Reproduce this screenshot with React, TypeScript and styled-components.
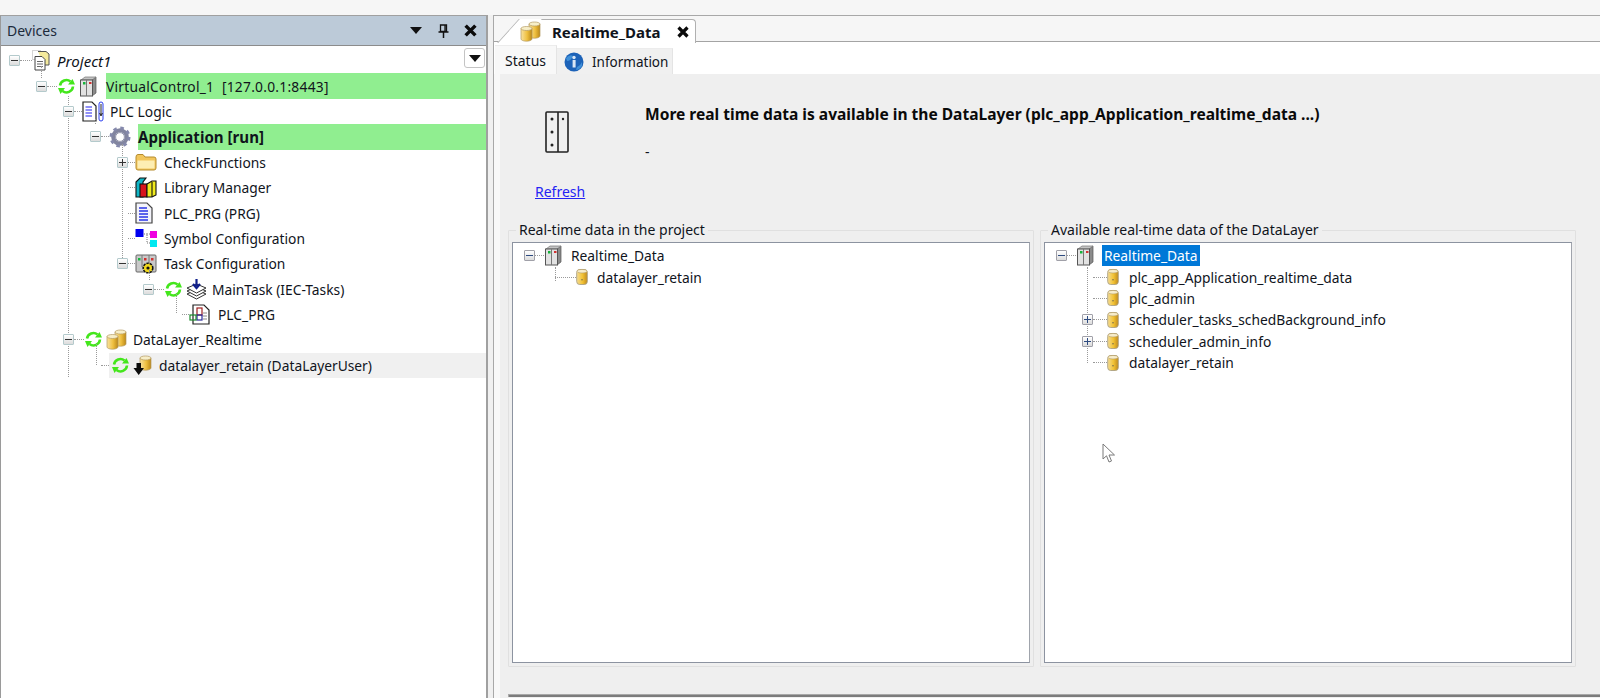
import React from 'react';
import styled, { createGlobalStyle } from 'styled-components';

const GlobalStyle = createGlobalStyle`
  html, body {
    margin: 0;
    padding: 0;
    background: #f5f5f5;
  }
  body {
    font-family: 'Noto Sans', 'Liberation Sans', sans-serif;
    font-size: 13.8px;
    color: #10141c;
  }
`;

/* ---------- icons ---------- */

const Sync = () => (
  <svg width="19" height="19" viewBox="0 0 19 19" fill="none">
    <path d="M3 8.5 A6.5 6.5 0 0 1 13.5 4.5" stroke="#44e61c" strokeWidth="2.6" />
    <path d="M16 9.5 A6.5 6.5 0 0 1 5.5 14" stroke="#44e61c" strokeWidth="2.6" />
    <polygon points="11,7.5 18,7.5 15.5,2" fill="#44e61c" />
    <polygon points="1,11 8,11 3.5,17" fill="#44e61c" />
  </svg>
);

const Server = () => (
  <svg width="19" height="21" viewBox="0 0 19 21">
    <polygon points="13,4 17,1 17,17 13,20" fill="#8b8b8b" stroke="#555" strokeWidth="0.7" />
    <polygon points="2,4 6,1 17,1 13,4" fill="#c4c4c4" stroke="#777" strokeWidth="0.7" />
    <rect x="1.5" y="4" width="12" height="16" fill="#e2e2e2" stroke="#555" strokeWidth="1" />
    <line x1="7.5" y1="4" x2="7.5" y2="20" stroke="#777" strokeWidth="1" />
    <rect x="4" y="6" width="2.5" height="2.5" fill="#16b33a" />
    <rect x="10" y="6" width="2.5" height="2" fill="#d23030" />
  </svg>
);

const ProjectDoc = () => (
  <svg width="18" height="21" viewBox="0 0 18 21" fill="none">
    <rect x="0.5" y="0.5" width="8" height="9" stroke="#aaa" strokeDasharray="1 1" />
    <path d="M6 1.5 H14 L17 4 V15 H12" fill="#f4ea9c" stroke="#555" />
    <path d="M3 6.5 H10 L13 9.5 V20 H3 Z" fill="#fff" stroke="#444" />
    <path d="M5 11.5 H11 M5 14 H11 M5 16.5 H11" stroke="#666" />
  </svg>
);

const PlcDoc = () => (
  <svg width="22" height="21" viewBox="0 0 22 21" fill="none">
    <path d="M1 1 H10 L14 5 V20 H1 Z" fill="#fff" stroke="#222" strokeWidth="1.2" />
    <path d="M3.5 6 H10 M3.5 9 H10 M3.5 12 H10 M3.5 15 H10" stroke="#2323f0" strokeWidth="1.2" />
    <rect x="17" y="1" width="4" height="19" rx="2" stroke="#2b3ff0" strokeWidth="1" />
    <path d="M19 3 V14 M17.6 12 L19 15 L20.4 12" stroke="#111" strokeWidth="0.9" />
  </svg>
);

const Gear = () => (
  <svg width="22" height="22" viewBox="0 0 22 22" fill="none">
    <circle cx="11" cy="11" r="6.8" stroke="#82859f" strokeWidth="4" />
    <circle cx="11" cy="11" r="9" stroke="#8589ac" strokeWidth="3" strokeDasharray="3.5 3.57" />
    <circle cx="11" cy="11" r="4.4" fill="#fff" stroke="#6a6d8c" strokeWidth="0.7" />
  </svg>
);

const Folder = () => (
  <svg width="22" height="18" viewBox="0 0 22 18">
    <path d="M1 4 Q1 1.5 3 1.5 H8 L10 4 H19 Q21 4 21 6 V15 Q21 17 19 17 H3 Q1 17 1 15 Z" fill="#f2c65c" stroke="#b58c2e" />
    <path d="M2.5 7.5 H19.5 V15 Q19.5 15.5 19 15.5 H3 Q2.5 15.5 2.5 15 Z" fill="#fdeeb3" />
  </svg>
);

const Books = () => (
  <svg width="22" height="21" viewBox="0 0 22 21" stroke="#111" strokeWidth="1.1">
    <polygon points="1,5 5,1 11,1 8,5 8,20 1,20" fill="#0fb6c6" />
    <rect x="5" y="7" width="7" height="13" fill="#d9141c" />
    <polygon points="12,7 17,4 21,4 21,18 17,20 12,20" fill="#f0ea1e" />
    <line x1="17" y1="5" x2="17" y2="20" />
  </svg>
);

const PrgDoc = () => (
  <svg width="18" height="22" viewBox="0 0 18 22" fill="none">
    <path d="M1 1 H12 L17 6 V21 H1 Z" fill="#f4f4fb" stroke="#444" strokeWidth="1.2" />
    <path d="M4 6 H12 M4 9 H13 M4 12 H13 M4 15 H13 M4 18 H13" stroke="#2a35e8" strokeWidth="1.3" />
  </svg>
);

const Symbols = () => (
  <svg width="22" height="18" viewBox="0 0 22 18" fill="none">
    <path d="M7 5 H12 V14 H15 M12 5 H15" stroke="#777" strokeDasharray="1 1" />
    <rect x="0.5" y="0" width="8" height="8" fill="#0000f0" />
    <rect x="15" y="2" width="7" height="7" fill="#f000e0" />
    <rect x="15" y="11" width="7" height="7" fill="#00e8f0" />
  </svg>
);

const TaskConfig = () => (
  <svg width="22" height="21" viewBox="0 0 22 21">
    <rect x="1" y="2" width="20" height="17" rx="1" fill="#c9c9c9" stroke="#666" />
    <path d="M7 2 V14 M14 2 V14" stroke="#777" />
    <rect x="3" y="5" width="2.5" height="2.5" fill="#18b840" />
    <rect x="9" y="5" width="2.5" height="2.5" fill="#d23030" />
    <rect x="16" y="5" width="2.5" height="2.5" fill="#d23030" />
    <circle cx="13" cy="15" r="4.8" fill="#f0d81c" stroke="#111" strokeWidth="1.6" strokeDasharray="2.4 1" />
    <circle cx="13" cy="15" r="1.6" fill="#111" />
  </svg>
);

const TaskStack = () => (
  <svg width="21" height="21" viewBox="0 0 21 21" fill="#fff" stroke="#333" strokeWidth="1">
    <polygon points="1,15 10.5,11 20,15 10.5,20" />
    <polygon points="1,12 10.5,8 20,12 10.5,17" />
    <polygon points="1,9 10.5,5 20,9 10.5,14" />
    <path d="M10.5 0 V7 M7 5 L10.5 9 L14 5" fill="none" stroke="#10208c" strokeWidth="2.2" />
  </svg>
);

const PouDoc = () => (
  <svg width="21" height="21" viewBox="0 0 21 21" fill="none">
    <path d="M4 1 H15 L20 6 V20 H4 Z" fill="#fff" stroke="#222" strokeWidth="1.2" />
    <path d="M14 9 H18 M14 12 H18 M14 15 H18" stroke="#888" />
    <rect x="8" y="4" width="5" height="7" stroke="#a02020" strokeWidth="1.2" />
    <rect x="8" y="11" width="5" height="5" stroke="#2a2a9c" strokeWidth="1.2" />
    <rect x="1" y="11" width="6" height="5" stroke="#1c8a2c" strokeWidth="1.2" />
  </svg>
);

const Cylinder = () => (
  <svg width="12" height="18" viewBox="0 0 12 18">
    <defs>
      <linearGradient id="goldSingle" x1="0" x2="1" y1="0" y2="0">
        <stop offset="0" stopColor="#f4dc94" />
        <stop offset="0.55" stopColor="#f2c234" />
        <stop offset="1" stopColor="#c08a1a" />
      </linearGradient>
    </defs>
    <rect x="0.7" y="1.5" width="10.6" height="15" rx="3" fill="url(#goldSingle)" stroke="#aaa084" strokeWidth="0.9" />
    <ellipse cx="6" cy="3.2" rx="5" ry="1.8" fill="#f6eccb" stroke="#b39a60" strokeWidth="0.6" />
    <rect x="5.5" y="11" width="1" height="1.4" fill="#555" />
  </svg>
);

const CylinderPair = () => (
  <svg width="21" height="21" viewBox="0 0 21 21">
    <path d="M9 3 V15 A5.5 2.2 0 0 0 20 15 V3 Z" fill="url(#goldPair)" stroke="#b39a60" strokeWidth="0.7" />
    <ellipse cx="14.5" cy="3" rx="5.5" ry="2" fill="#f7eec8" stroke="#b39a60" strokeWidth="0.7" />
    <path d="M1 7.5 V18 A5.5 2.2 0 0 0 12 18 V7.5 Z" fill="url(#goldPair)" stroke="#b39a60" strokeWidth="0.7" />
    <ellipse cx="6.5" cy="7.5" rx="5.5" ry="2" fill="#f7eec8" stroke="#b39a60" strokeWidth="0.7" />
    <defs>
      <linearGradient id="goldPair" x1="0" x2="1" y1="0" y2="0">
        <stop offset="0" stopColor="#f8e2a0" />
        <stop offset="0.55" stopColor="#efc040" />
        <stop offset="1" stopColor="#bb8818" />
      </linearGradient>
    </defs>
  </svg>
);

const CylinderDown = () => (
  <svg width="19" height="20" viewBox="0 0 19 20">
    <path d="M7 3 V13 A5.5 2.2 0 0 0 18 13 V3 Z" fill="url(#goldPair)" stroke="#b39a60" strokeWidth="0.7" />
    <ellipse cx="12.5" cy="3" rx="5.5" ry="2" fill="#f7eec8" stroke="#b39a60" strokeWidth="0.7" />
    <polygon points="3.5,8 8,8 8,13 11,13 5.7,20 0.5,13 3.5,13" fill="#0c0c0c" />
  </svg>
);

const InfoGlobe = () => (
  <svg width="20" height="20" viewBox="0 0 20 20">
    <circle cx="10" cy="10" r="9.5" fill="#1c62b8" />
    <path d="M2 6 Q6 2 9 4 Q7 9 3 9 Z M13 15 Q17 13 18 10 L18 14 Q15 18 12 18 Z" fill="#3f8fd8" />
    <rect x="8.6" y="8" width="3" height="7.5" fill="#d9e6f5" />
    <circle cx="10" cy="5.5" r="1.7" fill="#d9e6f5" />
  </svg>
);

const Rack = () => (
  <svg width="24" height="42" viewBox="0 0 24 42" fill="none">
    <rect x="1" y="1" width="22" height="40" rx="1" stroke="#222" strokeWidth="1.6" />
    <line x1="13" y1="1" x2="13" y2="41" stroke="#222" strokeWidth="1.6" />
    <circle cx="7" cy="8" r="1.5" fill="#222" />
    <circle cx="7" cy="21" r="1.5" fill="#222" />
    <circle cx="7" cy="34" r="1.5" fill="#222" />
    <circle cx="18" cy="8" r="1.2" fill="#222" />
  </svg>
);

const Triangle = () => (
  <svg width="12" height="7" viewBox="0 0 12 7">
    <polygon points="0,0 12,0 6,7" fill="#111" />
  </svg>
);

const Pin = () => (
  <svg width="11" height="14" viewBox="0 0 11 14" fill="none" stroke="#111">
    <path d="M2.5 1 H8.5 V7.5 H2.5 Z M7 1 V7.5 M0.5 8 H10.5" strokeWidth="1.3" />
    <path d="M5.5 8 V14" strokeWidth="1.5" />
  </svg>
);

const Cross = ({ size = 13 }: { size?: number }) => (
  <svg width={size} height={size} viewBox="0 0 12 12">
    <path d="M1.5 1.5 L10.5 10.5 M10.5 1.5 L1.5 10.5" stroke="#0a0a0a" strokeWidth="3.2" />
  </svg>
);

const Cursor = () => (
  <svg width="14" height="21" viewBox="0 0 14 21">
    <path d="M1 1 V16 L4.5 12.8 L7 19 L9.5 18 L7 12 L12.5 12 Z" fill="#fff" stroke="#7a7a7a" strokeWidth="1" />
  </svg>
);

/* ---------- page ---------- */

const Page = styled.div`
  width: 1600px;
  height: 698px;
  overflow: hidden;
  position: relative;
  display: flex;
  flex-direction: column;
  background: #f5f5f5;
`;

const TopStrip = styled.div`
  height: 15px;
  flex: none;
  background: #f6f6f6;
`;

const Main = styled.div`
  flex: 1;
  display: flex;
  min-height: 0;
`;

const DevicesPanel = styled.section`
  width: 488px;
  flex: none;
  box-sizing: border-box;
  display: flex;
  flex-direction: column;
  border-left: 1px solid #9a9a9a;
  border-right: 2px solid #a0a0a0;
  border-top: 1px solid #a0a0a0;
  background: #fff;
`;

const PanelHeader = styled.header`
  height: 29px;
  flex: none;
  display: flex;
  align-items: center;
  padding-left: 6px;
  background: #bccad8;
  border-bottom: 1px solid #8c8c8c;
  font-size: 14px;
  color: #1c2a3c;
`;

const PanelTitle = styled.span`
  flex: 1;
`;

const HeaderButton = styled.span<{ $width: number }>`
  width: ${p => p.$width}px;
  display: flex;
  justify-content: center;
`;

const Splitter = styled.div`
  width: 5px;
  flex: none;
  background: #f0f0f0;
`;

const TreeArea = styled.div`
  position: relative;
  flex: 1;
  padding-top: 2px;
`;

const Row = styled.div<{ $left: number; $height?: number }>`
  height: ${p => p.$height ?? 25.4}px;
  display: flex;
  align-items: center;
  padding-left: ${p => p.$left}px;
  white-space: pre;
`;

const Toggle = styled.span<{ $kind?: string; $tone?: string }>`
  width: 11px;
  height: 11px;
  flex: none;
  box-sizing: border-box;
  position: relative;
  visibility: ${p => (p.$kind ? 'visible' : 'hidden')};
  border: 1px solid ${p => (p.$tone === 'soft' ? '#b4cacc' : '#a0a0a8')};
  background: linear-gradient(#fff, #dcdcdc);
  border-radius: 1px;

  &::before {
    content: '';
    position: absolute;
    left: 1px;
    right: 1px;
    top: 4px;
    height: 1px;
    background: ${p => (p.$tone === 'soft' ? '#333' : '#2d4a80')};
  }

  &::after {
    content: '';
    display: ${p => (p.$kind === 'plus' ? 'block' : 'none')};
    position: absolute;
    top: 1px;
    bottom: 1px;
    left: 4px;
    width: 1px;
    background: ${p => (p.$tone === 'soft' ? '#333' : '#2d4a80')};
  }
`;

const Stub = styled.span<{ $width: number }>`
  width: ${p => p.$width}px;
  flex: none;
  border-top: 1px dotted #9a9a9a;
`;

const Body = styled.span<{ $shade?: boolean }>`
  flex: 1;
  align-self: stretch;
  display: flex;
  align-items: center;
  background: ${p => (p.$shade ? '#f0f0f0' : 'transparent')};
  padding-left: ${p => (p.$shade ? 2 : 0)}px;
`;

const IconSlot = styled.span<{ $width: number }>`
  width: ${p => p.$width}px;
  flex: none;
  display: flex;
  align-items: center;
  gap: 3px;
`;

const Label = styled.span<{ $fill?: string; $bold?: boolean; $italic?: boolean; $spread?: boolean }>`
  flex: 1;
  align-self: stretch;
  display: flex;
  align-items: center;
  background: ${p => p.$fill ?? 'transparent'};
  font-weight: ${p => (p.$bold ? 700 : 400)};
  font-style: ${p => (p.$italic ? 'italic' : 'normal')};
  font-size: ${p => (p.$bold || p.$italic ? 15.1 : 13.8)}px;
  letter-spacing: ${p => (p.$spread ? 0.25 : 0)}px;
`;

const Guide = styled.span<{ $x: number; $top: number; $height: number }>`
  position: absolute;
  left: ${p => p.$x}px;
  top: ${p => p.$top}px;
  height: ${p => p.$height}px;
  border-left: 1px dotted #9a9a9a;
`;

const ComboButton = styled.span`
  position: absolute;
  top: 2px;
  right: 1px;
  width: 21px;
  height: 20px;
  box-sizing: border-box;
  display: flex;
  align-items: center;
  justify-content: center;
  background: #fff;
  border: 1px solid #c4c4c4;
  border-radius: 3px;
`;

/* editor side */

const EditorPanel = styled.section`
  flex: 1;
  min-width: 0;
  display: flex;
  flex-direction: column;
  border-left: 1px solid #a8a8a8;
  border-top: 1px solid #a8a8a8;
  background: #f8f8f8;
`;

const DocTabStrip = styled.div`
  height: 26px;
  flex: none;
  box-sizing: border-box;
  padding: 3px 0 0 25px;
  display: flex;
  border-bottom: 1px solid #a4a4a4;
  background: #f6f6f6;
`;

const DocTab = styled.div`
  position: relative;
  width: 177px;
  height: 24px;
  box-sizing: border-box;
  display: flex;
  align-items: center;
  padding-left: 1px;
  gap: 11px;
  background: #fff;
  border-top: 1px solid #b0b0b0;
  border-right: 1px solid #b0b0b0;
  border-radius: 0 4px 0 0;
  font-weight: 700;
  font-size: 15px;

  &::before {
    content: '';
    position: absolute;
    left: -11px;
    top: -1px;
    bottom: 0;
    width: 22px;
    background: #fff;
    border-left: 1px solid #b0b0b0;
    transform: skewX(-42deg);
    z-index: 0;
  }

  & > * {
    position: relative;
    z-index: 1;
  }
`;

const DocTabClose = styled.span`
  margin-left: auto;
  margin-right: 6px;
  display: flex;
`;

const SubTabBar = styled.div`
  height: 32px;
  flex: none;
  box-sizing: border-box;
  display: flex;
  align-items: flex-end;
  padding-left: 1px;
  background: #fff;
`;

const SubTab = styled.div<{ $active?: boolean }>`
  box-sizing: border-box;
  display: flex;
  align-items: center;
  gap: 8px;
  height: ${p => (p.$active ? 29 : 26)}px;
  width: ${p => (p.$active ? 62 : 116)}px;
  padding-left: ${p => (p.$active ? 10 : 7)}px;
  padding-top: ${p => (p.$active ? 0 : 1)}px;
  background: ${p => (p.$active ? '#f8f8f8' : '#f0f0f0')};
  border-top: 1px solid #ececec;
  border-right: 1px solid #e4e4e4;
  font-size: ${p => (p.$active ? 14 : 13.5)}px;
`;

const StatusPane = styled.div`
  flex: 1;
  min-height: 0;
  margin-left: 6px;
  background: #efefef;
  display: flex;
  flex-direction: column;
`;

const InfoRow = styled.div`
  height: 148px;
  flex: none;
  display: grid;
  grid-template-columns: 145px 1fr;
`;

const RefreshColumn = styled.div`
  display: flex;
  flex-direction: column;
  padding: 37px 0 0 35px;
`;

const RackHolder = styled.div`
  padding-left: 10px;
`;

const RefreshLink = styled.a`
  margin-top: 25px;
  color: #2424f4;
  text-decoration: underline;
  font-size: 14px;
`;

const Message = styled.div`
  padding-top: 30px;
`;

const Headline = styled.div`
  font-weight: 700;
  font-size: 15.55px;
  line-height: 20px;
  color: #0a0a0a;
`;

const Dash = styled.div`
  margin-top: 18px;
  font-size: 14px;
  line-height: 20px;
`;

const Groups = styled.div`
  height: 443px;
  flex: none;
  display: grid;
  grid-template-columns: 526px 536px;
  gap: 6px;
  padding-left: 8px;
`;

const GroupBox = styled.fieldset`
  margin: 0;
  padding: 4px 3px 3px 3px;
  min-width: 0;
  display: flex;
  border: 1px solid #e0e0e0;
  border-radius: 1px;
`;

const GroupLegend = styled.legend`
  margin-left: 4px;
  padding: 0 3px;
  font-size: 14px;
  line-height: 16px;
`;

const ListBox = styled.div`
  flex: 1;
  box-sizing: border-box;
  height: 421px;
  position: relative;
  background: #fff;
  border: 1px solid #8c93a0;
  border-right-color: #a0a4ac;
  padding-top: 2px;
`;

const Selected = styled.span`
  background: #0078d7;
  color: #fff;
  height: 21px;
  display: flex;
  align-items: center;
  padding: 0 2px;
`;

const BottomEdge = styled.div`
  margin: 29px 0 0 8px;
  height: 2px;
  flex: none;
  background: #7c7c7c;
  border-top: 1px solid #a8a8a8;
  border-left: 1px solid #a8a8a8;
`;

const CursorMark = styled.span`
  position: absolute;
  left: 1102px;
  top: 443px;
  display: flex;
`;

/* ---------- data ---------- */

interface NodeData {
  left: number;
  toggle?: 'minus' | 'plus';
  stub: number;
  slot: number;
  icons: React.ReactNode;
  label: string;
  fill?: string;
  bold?: boolean;
  italic?: boolean;
  shade?: boolean;
  spread?: boolean;
}

const GREEN = '#90ee90';

const deviceNodes: NodeData[] = [
  { left: 8, toggle: 'minus', stub: 12, slot: 25, icons: <ProjectDoc />, label: 'Project1', italic: true },
  { left: 35, toggle: 'minus', stub: 10, slot: 49, icons: <><Sync /><Server /></>, label: 'VirtualControl_1  [127.0.0.1:8443]', fill: GREEN, spread: true },
  { left: 62, toggle: 'minus', stub: 8, slot: 28, icons: <PlcDoc />, label: 'PLC Logic' },
  { left: 89, toggle: 'minus', stub: 8, slot: 29, icons: <Gear />, label: 'Application [run]', fill: GREEN, bold: true },
  { left: 116, toggle: 'plus', stub: 7, slot: 29, icons: <Folder />, label: 'CheckFunctions' },
  { left: 116, stub: 7, slot: 29, icons: <Books />, label: 'Library Manager' },
  { left: 116, stub: 7, slot: 29, icons: <PrgDoc />, label: 'PLC_PRG (PRG)' },
  { left: 116, stub: 7, slot: 29, icons: <Symbols />, label: 'Symbol Configuration' },
  { left: 116, toggle: 'minus', stub: 7, slot: 29, icons: <TaskConfig />, label: 'Task Configuration' },
  { left: 142, toggle: 'minus', stub: 10, slot: 48, icons: <><Sync /><TaskStack /></>, label: 'MainTask (IEC-Tasks)' },
  { left: 170, stub: 7, slot: 29, icons: <PouDoc />, label: 'PLC_PRG' },
  { left: 62, toggle: 'minus', stub: 10, slot: 49, icons: <><Sync /><CylinderPair /></>, label: 'DataLayer_Realtime' },
  { left: 89, stub: 8, slot: 48, icons: <><Sync /><CylinderDown /></>, label: 'datalayer_retain (DataLayerUser)', shade: true },
];

const deviceGuides = [
  { x: 40, top: 20, height: 12 },
  { x: 67, top: 50, height: 281 },
  { x: 94, top: 73, height: 5 },
  { x: 121, top: 98, height: 116 },
  { x: 148, top: 224, height: 10 },
  { x: 175, top: 248, height: 19 },
  { x: 95, top: 298, height: 21 },
];

const availableData = [
  { name: 'plc_app_Application_realtime_data' },
  { name: 'plc_admin' },
  { name: 'scheduler_tasks_schedBackground_info', more: true },
  { name: 'scheduler_admin_info', more: true },
  { name: 'datalayer_retain' },
];

const ListRootRow = ({ selected }: { selected?: boolean }) => (
  <Row $left={11} $height={21.4}>
    <Toggle $kind="minus" />
    <Stub $width={9} />
    <IconSlot $width={selected ? 26 : 27}><Server /></IconSlot>
    <Label>{selected ? <Selected>Realtime_Data</Selected> : 'Realtime_Data'}</Label>
  </Row>
);

export default function App() {
  return (
    <Page>
      <GlobalStyle />
      <TopStrip />
      <Main>
        <DevicesPanel>
          <PanelHeader>
            <PanelTitle>Devices</PanelTitle>
            <HeaderButton $width={28}><Triangle /></HeaderButton>
            <HeaderButton $width={26}><Pin /></HeaderButton>
            <HeaderButton $width={28}><Cross /></HeaderButton>
            <HeaderButton $width={2} />
          </PanelHeader>
          <TreeArea>
            {deviceGuides.map(g => (
              <Guide key={`${g.x}-${g.top}`} $x={g.x} $top={g.top} $height={g.height} />
            ))}
            <ComboButton><Triangle /></ComboButton>
            {deviceNodes.map(node => (
              <Row key={`${node.left}-${node.label}`} $left={node.left}>
                <Toggle $kind={node.toggle} $tone="soft" />
                <Stub $width={node.stub} />
                <Body $shade={node.shade}>
                  <IconSlot $width={node.slot}>{node.icons}</IconSlot>
                  <Label $fill={node.fill} $bold={node.bold} $italic={node.italic} $spread={node.spread}>{node.label}</Label>
                </Body>
              </Row>
            ))}
          </TreeArea>
        </DevicesPanel>
        <Splitter />
        <EditorPanel>
          <DocTabStrip>
            <DocTab>
              <CylinderPair />
              <span>Realtime_Data</span>
              <DocTabClose><Cross size={12} /></DocTabClose>
            </DocTab>
          </DocTabStrip>
          <SubTabBar>
            <SubTab $active>Status</SubTab>
            <SubTab><InfoGlobe />Information</SubTab>
          </SubTabBar>
          <StatusPane>
            <InfoRow>
              <RefreshColumn>
                <RackHolder><Rack /></RackHolder>
                <RefreshLink>Refresh</RefreshLink>
              </RefreshColumn>
              <Message>
                <Headline>More real time data is available in the DataLayer (plc_app_Application_realtime_data ...)</Headline>
                <Dash>-</Dash>
              </Message>
            </InfoRow>
            <Groups>
              <GroupBox>
                <GroupLegend>Real-time data in the project</GroupLegend>
                <ListBox>
                  <Guide $x={42} $top={24} $height={14} />
                  <ListRootRow />
                  <Row $left={42} $height={21.4}>
                    <Stub $width={21} />
                    <IconSlot $width={21}><Cylinder /></IconSlot>
                    <Label>datalayer_retain</Label>
                  </Row>
                </ListBox>
              </GroupBox>
              <GroupBox>
                <GroupLegend>Available real-time data of the DataLayer</GroupLegend>
                <ListBox>
                  <Guide $x={42} $top={24} $height={96} />
                  <ListRootRow selected />
                  {availableData.map(item => (
                    <Row key={item.name} $left={37} $height={21.4}>
                      <Toggle $kind={item.more ? 'plus' : undefined} />
                      <Stub $width={14} />
                      <IconSlot $width={22}><Cylinder /></IconSlot>
                      <Label>{item.name}</Label>
                    </Row>
                  ))}
                </ListBox>
              </GroupBox>
            </Groups>
            <BottomEdge />
          </StatusPane>
        </EditorPanel>
      </Main>
      <CursorMark><Cursor /></CursorMark>
    </Page>
  );
}
